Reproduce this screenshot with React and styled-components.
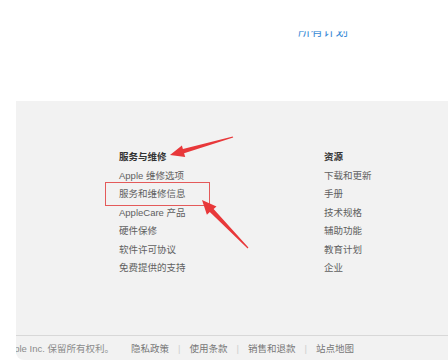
import React from 'react';
import styled, { createGlobalStyle, css } from 'styled-components';

const GlobalStyle = createGlobalStyle`
    html, body {
        margin: 0;
        padding: 0;
        background: #ffffff;
        font-family: "Liberation Sans", "Noto Sans CJK SC", sans-serif;
    }
`

const Page = styled.div`
    position: relative;
    width: 448px;
    height: 364px;
    overflow: hidden;
`

const TopBar = styled.div`
    height: 101px;
    box-sizing: border-box;
    padding: 22px 0 0 298px;
`

const PlanLink = styled.span`
    display: inline-block;
    font-size: 12.5px;
    line-height: 15px;
    color: #3a8ad6;
    clip-path: inset(42% 0 0 0);
`

const Panel = styled.div`
    margin-left: 16px;
    height: 259px;
    background: #f2f2f2;
    border-bottom-left-radius: 8px;
    overflow: hidden;
    display: flex;
    flex-direction: column;
`

const Columns = styled.div`
    flex: 1;
    display: flex;
    padding: 47px 0 0 103px;
`

const Column = styled.div`
    width: ${p => p.width}px;
    font-size: 9.5px;
    line-height: 18.5px;
`

const Heading = styled.div`
    color: #333333;
    font-weight: bold;
`

const Item = styled.div`
    position: relative;
    color: #606060;
    white-space: nowrap;

    ${p => p.highlighted && css`
        &::after {
            content: '';
            position: absolute;
            left: -14px;
            top: -3px;
            width: 103px;
            height: 22px;
            border: 1px solid #e45a5a;
        }
    `}
`

const Footer = styled.div`
    height: 24px;
    border-top: 1px solid #d8d8d8;
    display: flex;
    align-items: center;
    font-size: 9.5px;
    color: #8a8a8a;
    white-space: nowrap;
`

const Copyright = styled.div`
    width: 98px;
    flex-shrink: 0;
    display: flex;
    justify-content: flex-end;
    overflow: hidden;
    margin-right: 17px;
`

const FooterLink = styled.span`
    color: #777777;
`

const Sep = styled.span`
    color: #cfcfcf;
    margin: 0 9px;
`

const Arrows = styled.svg`
    position: absolute;
    left: 0;
    top: 0;
    pointer-events: none;
`

const services = ['Apple 维修选项', '服务和维修信息', 'AppleCare 产品', '硬件保修', '软件许可协议', '免费提供的支持'];
const resources = ['下载和更新', '手册', '技术规格', '辅助功能', '教育计划', '企业'];
const links = ['隐私政策', '使用条款', '销售和退款', '站点地图'];

function App() {
    return (
        <Page>
            <GlobalStyle />
            <TopBar>
                <PlanLink>所有计划</PlanLink>
            </TopBar>
            <Panel>
                <Columns>
                    <Column width={205}>
                        <Heading>服务与维修</Heading>
                        {services.map((s, i) =>
                            <Item key={s} highlighted={i === 1}>{s}</Item>
                        )}
                    </Column>
                    <Column width={100}>
                        <Heading>资源</Heading>
                        {resources.map(r => <Item key={r}>{r}</Item>)}
                    </Column>
                </Columns>
                <Footer>
                    <Copyright><span>Copyright © 2023 Apple Inc. 保留所有权利。</span></Copyright>
                    {links.map((l, i) =>
                        <React.Fragment key={l}>
                            {i > 0 && <Sep>|</Sep>}
                            <FooterLink>{l}</FooterLink>
                        </React.Fragment>
                    )}
                </Footer>
            </Panel>
            <Arrows width="448" height="364" viewBox="0 0 448 364">
                <polygon fill="#e8383a" points="170,155 185.2,156.9 184.1,153.3 233.2,137.6 232.8,136.4 182.9,149 181.9,145.4" />
                <polygon fill="#e8383a" points="202,200 216.5,206.5 213.6,209 248.4,247.6 247.6,248.4 209.8,211.9 206.9,214.8" />
            </Arrows>
        </Page>
    );
}

export default App;
